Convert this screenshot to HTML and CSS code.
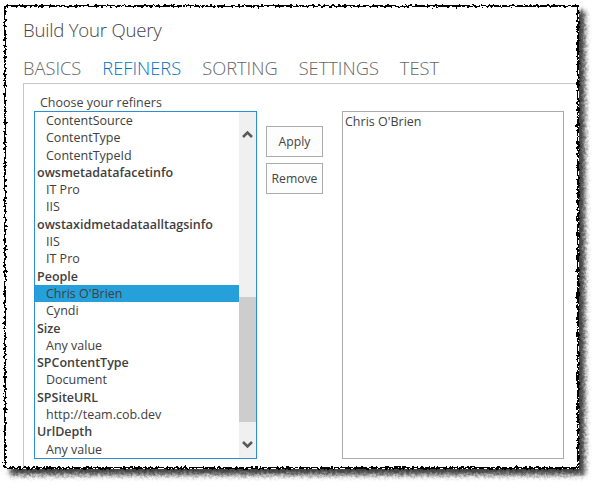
FILE: index.html
```html
<!DOCTYPE html>
<html>
<head>
<meta charset="utf-8">
<link rel="stylesheet" href="styles.css">
</head>
<body>
<svg class="defs" width="0" height="0" aria-hidden="true">
  <filter id="rough" x="-2%" y="-2%" width="104%" height="104%">
    <feTurbulence type="fractalNoise" baseFrequency="0.35" numOctaves="2" seed="7"/>
    <feDisplacementMap in="SourceGraphic" scale="5" xChannelSelector="R" yChannelSelector="G"/>
  </filter>
</svg>
<div class="frame">
  <div class="shadow"></div>
  <div class="sheet">
    <h1 class="title">Build Your Query</h1>
    <nav class="tabs">
      <span class="tab">BASICS</span>
      <span class="tab active">REFINERS</span>
      <span class="tab">SORTING</span>
      <span class="tab">SETTINGS</span>
      <span class="tab">TEST</span>
    </nav>
    <div class="panel">
      <div class="label">Choose your refiners</div>
      <div class="row">
        <div class="listbox">
          <ul class="items">
            <li class="item">ContentSource</li>
            <li class="item">ContentType</li>
            <li class="item">ContentTypeId</li>
            <li class="group">owsmetadatafacetinfo</li>
            <li class="item">IT Pro</li>
            <li class="item">IIS</li>
            <li class="group">owstaxidmetadataalltagsinfo</li>
            <li class="item">IIS</li>
            <li class="item">IT Pro</li>
            <li class="group">People</li>
            <li class="item selected">Chris O'Brien</li>
            <li class="item">Cyndi</li>
            <li class="group">Size</li>
            <li class="item">Any value</li>
            <li class="group">SPContentType</li>
            <li class="item">Document</li>
            <li class="group">SPSiteURL</li>
            <li class="item">http://team.cob.dev</li>
            <li class="group">UrlDepth</li>
            <li class="item">Any value</li>
          </ul>
          <div class="scrollbar">
            <svg class="arrow" width="17" height="17" viewBox="0 0 17 17"><polyline points="4,11 8.5,6.5 13,11" fill="none" stroke="#5a5a5a" stroke-width="2.6"/></svg>
            <div class="track"><div class="thumb"></div></div>
            <svg class="arrow" width="17" height="17" viewBox="0 0 17 17"><polyline points="4,6 8.5,10.5 13,6" fill="none" stroke="#5a5a5a" stroke-width="2.6"/></svg>
          </div>
        </div>
        <div class="buttons">
          <button class="btn">Apply</button>
          <button class="btn">Remove</button>
        </div>
        <div class="selectedbox">Chris O'Brien</div>
      </div>
    </div>
  </div>
  <div class="edge"></div>
</div>
</body>
</html>
```
FILE: styles.css
```css
html, body {
  margin: 0;
  padding: 0;
  background: #ffffff;
}
body {
  width: 598px;
  height: 491px;
  overflow: hidden;
  font-family: "Open Sans", "Noto Sans", sans-serif;
  color: #444444;
}
.defs {
  position: absolute;
  width: 0;
  height: 0;
}
.frame {
  position: relative;
  margin: 5px 0 0 4px;
  width: 575px;
  height: 464px;
}
.shadow {
  position: absolute;
  inset: 0;
  box-shadow: 6px 6px 5px rgba(0, 0, 0, 0.75);
  filter: url(#rough);
}
.sheet {
  position: relative;
  width: 575px;
  height: 464px;
  background: #ffffff;
  padding-left: 19px;
  box-sizing: border-box;
  overflow: hidden;
}
.edge {
  position: absolute;
  inset: 0;
  border: 2px solid #000000;
  filter: url(#rough);
  pointer-events: none;
}
.title {
  margin: 0;
  padding-top: 12px;
  font-size: 18.6px;
  line-height: 26px;
  font-weight: 300;
  color: #444444;
  letter-spacing: -0.2px;
}
.tabs {
  display: flex;
  gap: 21px;
  margin-top: 13px;
  height: 27px;
}
.tab {
  font-size: 18.3px;
  line-height: 24px;
  font-weight: 300;
  color: #666666;
  letter-spacing: 0;
}
.tab.active {
  color: #0072c6;
}
.panel {
  border-top: 1px solid #c6c6c6;
  border-left: 1px solid #c6c6c6;
  height: 400px;
  padding-left: 10px;
}
.label {
  margin: 10px 0 0 6px;
  font-size: 12.5px;
  line-height: 17px;
  color: #444444;
}
.row {
  display: flex;
  align-items: flex-start;
}
.listbox {
  display: flex;
  width: 223px;
  height: 348px;
  box-sizing: border-box;
  border: 1px solid #2b8fd6;
}
.items {
  list-style: none;
  margin: 0;
  padding: 0;
  width: 204px;
  font-size: 12.5px;
  line-height: 17.3px;
  color: #404040;
}
.items li {
  height: 17.3px;
  white-space: nowrap;
}
.group {
  font-weight: 600;
  padding-left: 2px;
}
.item {
  padding-left: 11px;
}
.item.selected {
  background: #26a0da;
}
.scrollbar {
  width: 17px;
  height: 346px;
  background: #f0f0f0;
  display: flex;
  flex-direction: column;
}
.arrow {
  display: block;
  flex: none;
  margin-top: 14px;
}
.scrollbar .arrow:last-child {
  margin-top: 0;
  margin-bottom: 5px;
}
.track {
  flex: 1;
  position: relative;
}
.thumb {
  margin-top: 154px;
  height: 125px;
  background: #cdcdcd;
}
.buttons {
  display: flex;
  flex-direction: column;
  gap: 6px;
  margin: 15px 0 0 9px;
}
.btn {
  width: 57px;
  height: 31px;
  padding: 0;
  background: #fdfdfd;
  border: 1px solid #ababab;
  font-family: "Open Sans", "Noto Sans", sans-serif;
  font-size: 12.2px;
  color: #444444;
}
.selectedbox {
  margin-left: 19px;
  width: 222px;
  height: 348px;
  box-sizing: border-box;
  border: 1px solid #ababab;
  padding: 1px 0 0 2px;
  font-size: 12.5px;
  line-height: 17px;
  color: #444444;
}
```
